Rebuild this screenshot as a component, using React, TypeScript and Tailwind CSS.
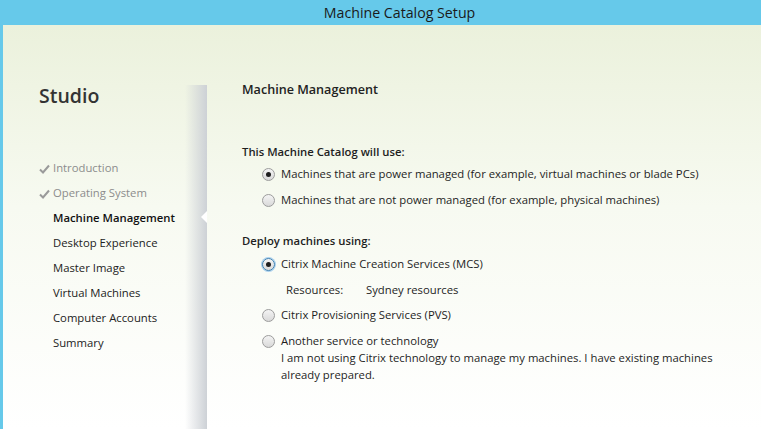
import React from "react";

function Check() {
  return (
    <svg width="11" height="10" viewBox="0 0 11 10" className="mr-[3px]">
      <path d="M1 5.5 L4 8.5 L10 1.5" stroke="#9a9a9a" strokeWidth="2" fill="none" />
    </svg>
  );
}

function Radio({ checked, focused }: { checked?: boolean; focused?: boolean }) {
  return (
    <span
      className={
        "relative inline-flex h-[13px] w-[13px] shrink-0 items-center justify-center rounded-full border bg-gradient-to-b from-[#f4f4f4] to-[#d9d9d9] " +
        (focused ? "border-[#3c7fb1] ring-1 ring-[#a9d0ef]" : "border-[#9c9c9c]")
      }
    >
      {checked && <span className="h-[5px] w-[5px] rounded-full bg-[#1e1e1e]" />}
    </span>
  );
}

function RadioRow({ label, checked, focused }: { label: string; checked?: boolean; focused?: boolean }) {
  return (
    <div className="flex h-[26px] items-center gap-[6px] pl-[20px]">
      <Radio checked={checked} focused={focused} />
      <span>{label}</span>
    </div>
  );
}

export default function App() {
  const items: { label: string; state: "done" | "active" | "todo" }[] = [
    { label: "Introduction", state: "done" },
    { label: "Operating System", state: "done" },
    { label: "Machine Management", state: "active" },
    { label: "Desktop Experience", state: "todo" },
    { label: "Master Image", state: "todo" },
    { label: "Virtual Machines", state: "todo" },
    { label: "Computer Accounts", state: "todo" },
    { label: "Summary", state: "todo" },
  ];
  return (
    <div
      className="flex h-[429px] w-[761px] flex-col overflow-hidden bg-[#66c9ea] text-[11.3px] text-[#1e1e1e]"
      style={{ fontFamily: '"Open Sans", "Noto Sans", sans-serif' }}
    >
      <div className="flex h-[25px] shrink-0 items-center justify-center pl-[38px] text-[14.2px] text-[#1a1a1a]">
        Machine Catalog Setup
      </div>
      <div className="ml-[3px] flex flex-1 bg-gradient-to-b from-[#ebf1dc] via-[#f7faf1] via-45% to-white">
        <div className="flex w-[204px] shrink-0">
          <div className="flex-1">
            <div className="pl-[36px] pt-[56px] text-[19.5px] font-semibold leading-[30px] text-[#333]">Studio</div>
            <div className="mt-[45px] flex flex-col">
              {items.map((it) => (
                <div
                  key={it.label}
                  className={
                    "flex h-[25px] items-center pl-[36px] " +
                    (it.state === "done"
                      ? "text-[#8c8c8c]"
                      : it.state === "active"
                      ? "pl-[50px] font-semibold text-[#111]"
                      : "pl-[50px] text-[#222]")
                  }
                >
                  {it.state === "done" && <Check />}
                  {it.label}
                </div>
              ))}
            </div>
          </div>
          <div className="relative mt-[60px] w-[22px] bg-gradient-to-r from-transparent to-[#cdd1d6]">
            <div className="absolute right-0 top-[126px] h-0 w-0 border-y-[6px] border-r-[6px] border-y-transparent border-r-white" />
          </div>
        </div>
        <div className="flex-1 pl-[35px]">
          <div className="pt-[56px] text-[12.6px] font-semibold leading-[18px] text-[#222]">Machine Management</div>
          <div className="mt-[44px] font-semibold leading-[18px]">This Machine Catalog will use:</div>
          <RadioRow checked label="Machines that are power managed (for example, virtual machines or blade PCs)" />
          <RadioRow label="Machines that are not power managed (for example, physical machines)" />
          <div className="mt-[19px] font-semibold leading-[18px]">Deploy machines using:</div>
          <div className="mt-[1px]">
            <RadioRow checked focused label="Citrix Machine Creation Services (MCS)" />
          </div>
          <div className="flex h-[26px] items-center pl-[44px]">
            <span className="w-[80px]">Resources:</span>
            <span>Sydney resources</span>
          </div>
          <div className="-mt-[1px]">
            <RadioRow label="Citrix Provisioning Services (PVS)" />
          </div>
          <RadioRow label="Another service or technology" />
          <div className="-mt-[5px] w-[485px] pl-[39px] leading-[17px]">
            I am not using Citrix technology to manage my machines. I have existing machines already prepared.
          </div>
        </div>
      </div>
    </div>
  );
}
